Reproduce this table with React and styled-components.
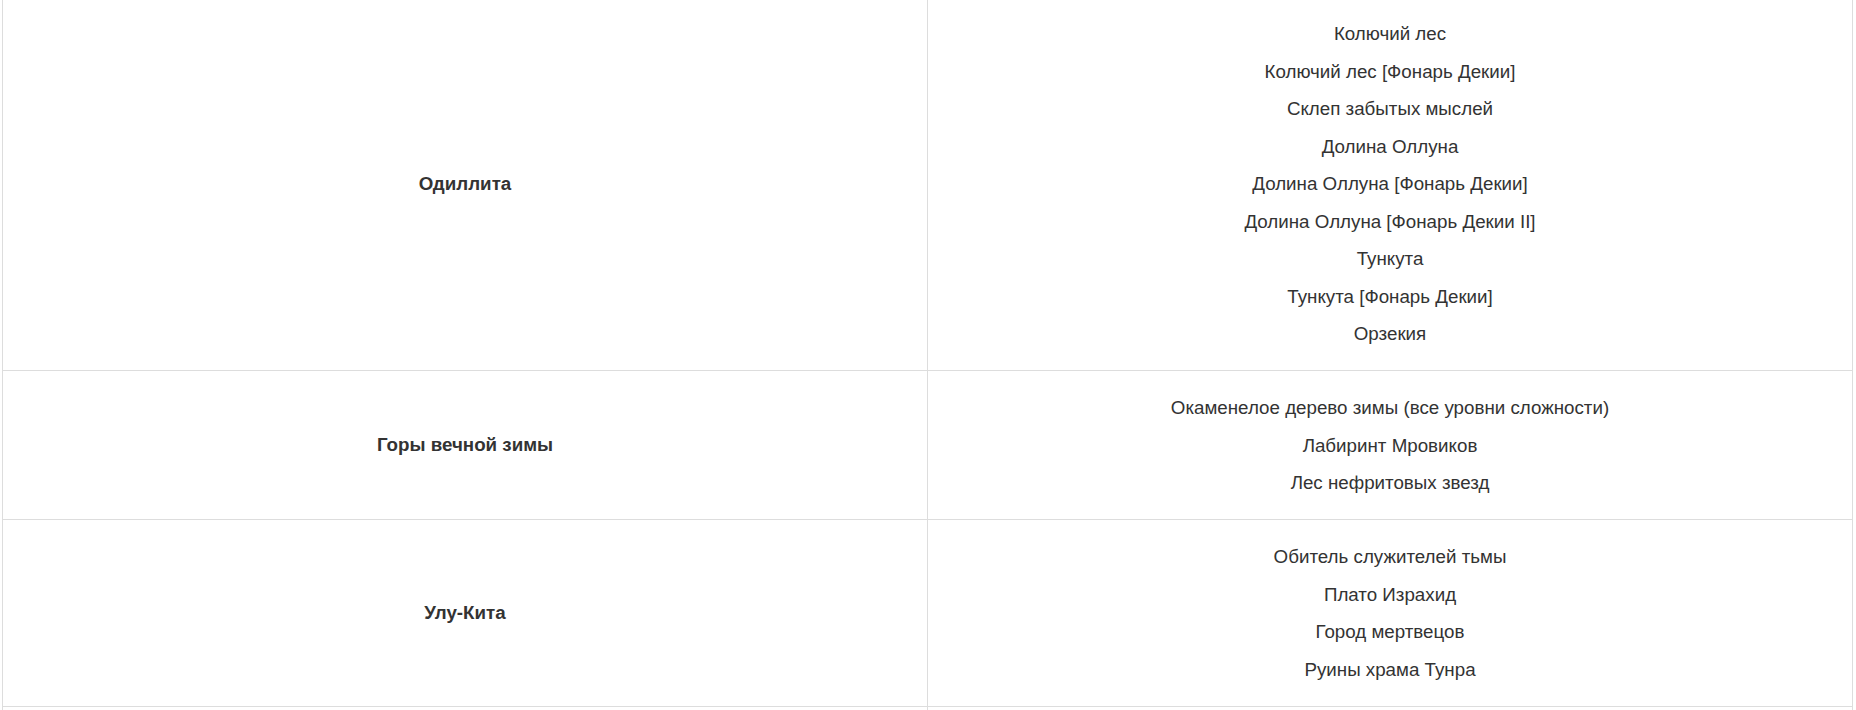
import styled, { createGlobalStyle } from "styled-components";

const GlobalStyle = createGlobalStyle`
  html, body {
    margin: 0;
    padding: 0;
    background: #fff;
    overflow: hidden;
  }
  body {
    font-family: "Liberation Sans", Arial, Helvetica, sans-serif;
    color: #333;
  }
`;

const Page = styled.div`
  padding: 0 3px 0 2px;
  margin-top: -4px;
`;

const Table = styled.table`
  width: 100%;
  border-collapse: collapse;
  table-layout: fixed;
  font-size: 18.75px;
`;

const Cell = styled.td`
  width: 50%;
  border: 1px solid #ddd;
  padding: 18px 8px 17.5px;
  text-align: center;
  vertical-align: middle;
  font-weight: ${({ bold }) => (bold ? 700 : 400)};
  height: ${({ h }) => (h ? `${h}px` : "auto")};
`;

const Line = styled.p`
  margin: 0;
  line-height: 37.5px;
`;

const ROWS = [
  {
    zone: "Одиллита",
    places: [
      "Колючий лес",
      "Колючий лес [Фонарь Декии]",
      "Склеп забытых мыслей",
      "Долина Оллуна",
      "Долина Оллуна [Фонарь Декии]",
      "Долина Оллуна [Фонарь Декии II]",
      "Тункута",
      "Тункута [Фонарь Декии]",
      "Орзекия",
    ],
  },
  {
    zone: "Горы вечной зимы",
    places: [
      "Окаменелое дерево зимы (все уровни сложности)",
      "Лабиринт Мровиков",
      "Лес нефритовых звезд",
    ],
  },
  {
    zone: "Улу-Кита",
    places: [
      "Обитель служителей тьмы",
      "Плато Израхид",
      "Город мертвецов",
      "Руины храма Тунра",
    ],
  },
];

export default function App() {
  return (
    <>
      <GlobalStyle />
      <Page>
        <Table>
          <tbody>
            {ROWS.map((row) => (
              <tr key={row.zone}>
                <Cell bold>{row.zone}</Cell>
                <Cell>
                  {row.places.map((p) => (
                    <Line key={p}>{p}</Line>
                  ))}
                </Cell>
              </tr>
            ))}
            <tr>
              <Cell bold h={80}></Cell>
              <Cell h={80}></Cell>
            </tr>
          </tbody>
        </Table>
      </Page>
    </>
  );
}
